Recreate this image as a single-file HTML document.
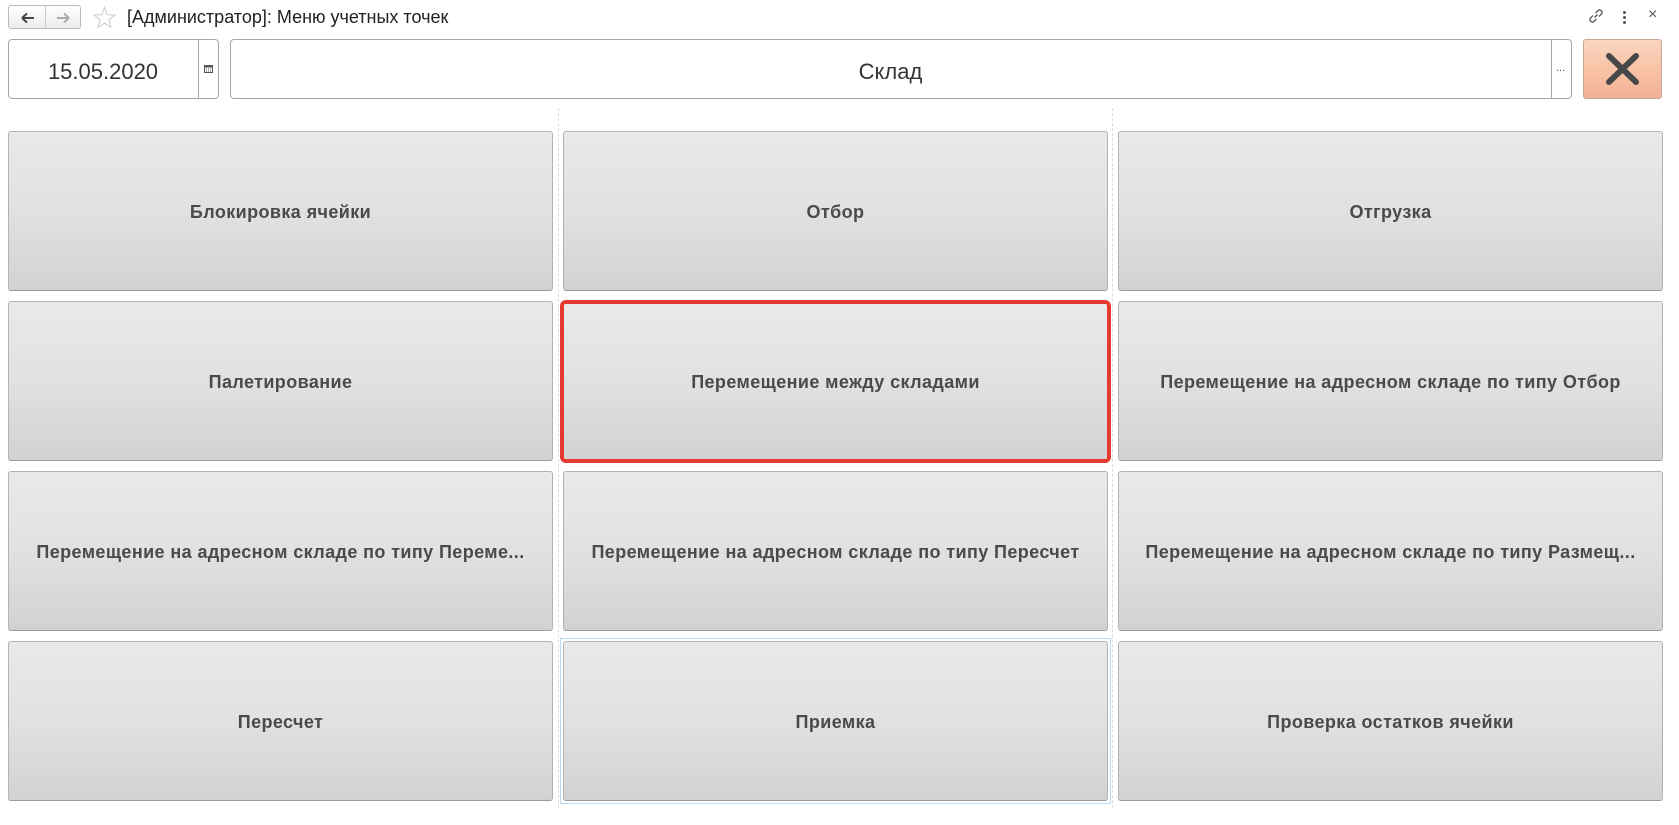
<!DOCTYPE html>
<html><head><meta charset="utf-8"><style>
*{box-sizing:border-box;margin:0;padding:0}
body{width:1679px;height:825px;background:#fff;position:relative;overflow:hidden;font-family:"Liberation Sans",sans-serif;color:#333}
.abs{position:absolute}
.nav{left:8px;top:5px;width:73px;height:24px;border:1px solid #bbb;border-radius:3px;background:linear-gradient(#fff,#ececec)}
.nav .d{position:absolute;left:36px;top:0;bottom:0;width:1px;background:#ccc}
.title{left:127px;top:7px;font-size:18px;color:#222}
.field{border:1px solid #a8a8a8;border-radius:4px;background:#fff}
.btn{position:absolute;width:545px;height:160px;border:1px solid #b3b3b3;border-bottom-color:#9a9a9a;border-radius:3px;background:linear-gradient(#e9e9e9 0%,#e1e1e1 50%,#d2d2d2 100%);display:flex;align-items:center;justify-content:center;font-weight:bold;font-size:18px;letter-spacing:0.4px;color:#4a4a4a;white-space:nowrap;overflow:hidden;padding-top:2px}
.c1{left:8px}.c2{left:563px}.c3{left:1118px}
.r1{top:131px}.r2{top:301px}.r3{top:471px}.r4{top:641px}
.dash{position:absolute;top:108px;height:700px;border-left:1px dashed #dcdcdc;width:0}
</style></head><body>
<div class="abs nav"><div class="d"></div>
<svg class="abs" style="left:12px;top:6px" width="14" height="12"><path d="M1 6H13M1 6L6 1.5M1 6L6 10.5" stroke="#444" stroke-width="2" fill="none"/></svg>
<svg class="abs" style="left:47px;top:6px" width="14" height="12"><path d="M1 6H13M13 6L8 1.5M13 6L8 10.5" stroke="#aaa" stroke-width="2" fill="none"/></svg>
</div>
<svg class="abs" style="left:93px;top:6px" width="23" height="23"><path d="M11.5 1.5L14.3 8.6L21.8 9L16 13.9L17.9 21.3L11.5 17.2L5.1 21.3L7 13.9L1.2 9L8.7 8.6Z" fill="none" stroke="#c8c8c8" stroke-width="1"/></svg>
<div class="abs title">[Администратор]: Меню учетных точек</div>
<svg class="abs" style="left:1587px;top:7px" width="18" height="18"><path d="M7.5 10.5L10.5 7.5M6 8.5L3.5 11a2.5 2.5 0 0 0 3.5 3.5L9.5 12M12 9.5L14.5 7a2.5 2.5 0 0 0-3.5-3.5L8.5 6" stroke="#555" stroke-width="1.3" fill="none"/></svg>
<div class="abs" style="left:1623px;top:11px;width:3px;height:3px;background:#555;border-radius:50%;box-shadow:0 5px 0 #555,0 10px 0 #555"></div>
<div class="abs" style="left:1648px;top:6px;font-size:16px;color:#555">×</div>
<div class="abs field" style="left:8px;top:39px;width:211px;height:60px"></div>
<div class="abs" style="left:198px;top:39px;width:1px;height:60px;background:#a8a8a8"></div>
<div class="abs" style="left:8px;top:59px;width:190px;text-align:center;font-size:22px;color:#333">15.05.2020</div>
<svg class="abs" style="left:204px;top:64px" width="9" height="9"><rect x="0.5" y="1.5" width="8" height="7" fill="none" stroke="#555"/><rect x="0.5" y="1.5" width="8" height="2" fill="#555"/><path d="M2 5h1M4 5h1M6 5h1M2 7h1M4 7h1M6 7h1" stroke="#555"/></svg>
<div class="abs field" style="left:230px;top:39px;width:1342px;height:60px"></div>
<div class="abs" style="left:1551px;top:39px;width:1px;height:60px;background:#a8a8a8"></div>
<div class="abs" style="left:230px;top:59px;width:1321px;text-align:center;font-size:22px;color:#333">Склад</div>
<div class="abs" style="left:1556px;top:62px;font-size:11px;color:#555">...</div>
<div class="abs" style="left:1583px;top:39px;width:79px;height:60px;border:1px solid #c9a595;border-radius:3px;background:linear-gradient(#fad5bf,#f8c0a3 60%,#efb095)"></div>
<svg class="abs" style="left:1604px;top:51px" width="37" height="36"><path d="M5 5L32 31M32 5L5 31" stroke="#474747" stroke-width="6" stroke-linecap="round"/></svg>
<div class="dash" style="left:558px"></div>
<div class="dash" style="left:1112px"></div>
<div class="btn c1 r1">Блокировка ячейки</div>
<div class="btn c2 r1">Отбор</div>
<div class="btn c3 r1">Отгрузка</div>
<div class="btn c1 r2">Палетирование</div>
<div class="abs" style="left:560px;top:300px;width:551px;height:163px;border:4px solid #e53a30;border-radius:6px"></div>
<div class="btn c2 r2" style="border:none;left:564px;top:304px;width:543px;height:155px;">Перемещение между складами</div>
<div class="btn c3 r2">Перемещение на адресном складе по типу Отбор</div>
<div class="btn c1 r3">Перемещение на адресном складе по типу Переме...</div>
<div class="btn c2 r3">Перемещение на адресном складе по типу Пересчет</div>
<div class="btn c3 r3">Перемещение на адресном складе по типу Размещ...</div>
<div class="btn c1 r4">Пересчет</div>
<div class="abs" style="left:560px;top:638px;width:551px;height:166px;border:1px solid #b5dcf7"></div>
<div class="btn c2 r4">Приемка</div>
<div class="btn c3 r4">Проверка остатков ячейки</div>
</body></html>
